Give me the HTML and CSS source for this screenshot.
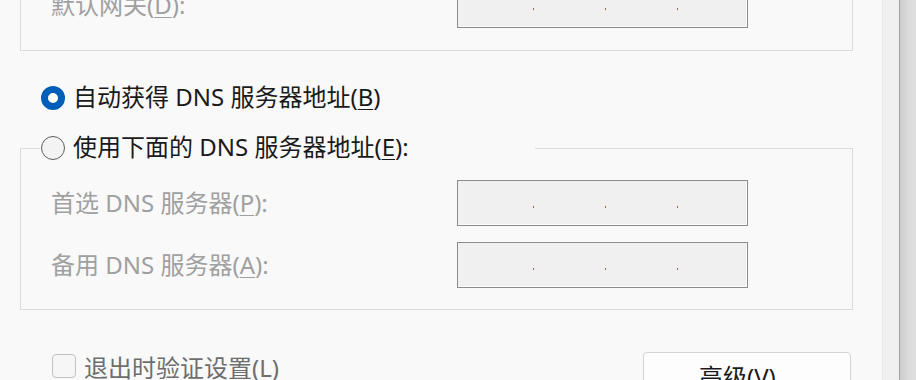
FILE: index.html
```html
<!DOCTYPE html>
<html lang="zh-CN">
<head>
    <meta charset="UTF-8">
    <title>Internet 协议版本 4 (TCP/IPv4) 属性</title>
    <link rel="stylesheet" href="styles.css">
</head>
<body>
    <div class="window">
        <div class="dialog">
            <div class="group group-top">
                <div class="field-row">
                    <span class="field-label">默认网关(<u>D</u>):</span>
                    <div class="ip-box"><i></i><i></i><i></i></div>
                </div>
            </div>

            <label class="radio-row">
                <span class="radio checked"></span>
                <span class="radio-text">自动获得 DNS 服务器地址(<u>B</u>)</span>
            </label>

            <fieldset class="group group-dns">
                <legend class="radio-row legend-row">
                    <span class="radio"></span>
                    <span class="radio-text">使用下面的 DNS 服务器地址(<u>E</u>):</span>
                </legend>
                <div class="field-row">
                    <span class="field-label">首选 DNS 服务器(<u>P</u>):</span>
                    <div class="ip-box"><i></i><i></i><i></i></div>
                </div>
                <div class="field-row">
                    <span class="field-label">备用 DNS 服务器(<u>A</u>):</span>
                    <div class="ip-box"><i></i><i></i><i></i></div>
                </div>
            </fieldset>

            <div class="bottom-row">
                <label class="check-row">
                    <span class="checkbox"></span>
                    <span class="check-text">退出时验证设置(<u>L</u>)</span>
                </label>
                <button class="btn">高级(<u>V</u>)...</button>
            </div>
        </div>
        <div class="track"></div>
        <div class="edge"></div>
    </div>
</body>
</html>
```

FILE: styles.css
```css
html, body {
    margin: 0;
    height: 380px;
    overflow: hidden;
}
body {
    font-family: "Noto Sans", "Noto Sans CJK SC", sans-serif;
    font-size: 24px;
    color: #1a1a1a;
    background: #f9f9f9;
}
u {
    text-decoration-thickness: 1px;
    text-underline-offset: 3px;
}
.window {
    display: flex;
    height: 380px;
}
.dialog {
    box-sizing: border-box;
    width: 883px;
    padding: 0 29px 0 20px;
    border-right: 1px solid #e9e9e9;
    background: #f9f9f9;
}
.track {
    width: 16px;
    background: #f0f0f0;
}
.edge {
    flex: 1;
    border-left: 1px solid #a3a3a3;
    background: linear-gradient(to right, #cdcdcd, #dcdcdc 60%, #dedede);
}

/* group boxes */
.group {
    border: 1px solid #dcdcdc;
    margin: 0;
    min-width: 0;
}
.group-top {
    margin-top: -31px;
    padding: 12px 0 22px 30px;
}
.group-dns {
    margin-top: 25px;
    padding: 19px 0 21px 30px;
}
.field-row {
    display: flex;
    align-items: center;
    height: 46px;
}
.field-row + .field-row {
    margin-top: 16px;
}
.field-label {
    width: 406px;
    color: #a0a0a0;
    line-height: 30px;
}
.ip-box {
    width: 291px;
    height: 46px;
    box-sizing: border-box;
    border: 1px solid #8b8b8b;
    background: #f0f0f0;
    box-shadow: inset -1px -1px 0 #fcfcfc;
    display: flex;
    gap: 71px;
    padding: 25px 0 0 75px;
}
.ip-box i {
    width: 1px;
    height: 2px;
    background: #8c6a48;
}

/* radios */
.radio-row {
    display: flex;
    align-items: center;
    gap: 8px;
    height: 24px;
    margin: 35px 0 0 21px;
}
.legend-row {
    width: 495px;
    height: 26px;
    margin: 0 0 0 -11px;
    padding: 0 0 0 1px;
    box-sizing: border-box;
}
.radio {
    width: 24px;
    height: 24px;
    border-radius: 50%;
    box-sizing: border-box;
    border: 1px solid #5c5c5c;
    background: #f3f3f3;
    flex-shrink: 0;
}
.radio.checked {
    border: 7px solid #005fb8;
    background: #ffffff;
}
.radio-text {
    line-height: 26px;
    margin-top: -3px;
}

/* bottom */
.bottom-row {
    display: flex;
    justify-content: space-between;
    align-items: flex-start;
    margin-top: 42px;
    padding: 0 2px 0 32px;
}
.check-row {
    display: flex;
    align-items: flex-start;
    gap: 8px;
    margin-top: 2px;
}
.checkbox {
    width: 24px;
    height: 24px;
    box-sizing: border-box;
    border: 1px solid #c2c2c2;
    border-radius: 4px;
    background: #f6f6f6;
}
.check-text {
    color: #6e6e6e;
    line-height: 28px;
}
.btn {
    width: 208px;
    height: 46px;
    font: inherit;
    color: #1a1a1a;
    background: #fdfdfd;
    border: 1px solid #d4d4d4;
    border-radius: 4px;
    padding: 0;
}
```
